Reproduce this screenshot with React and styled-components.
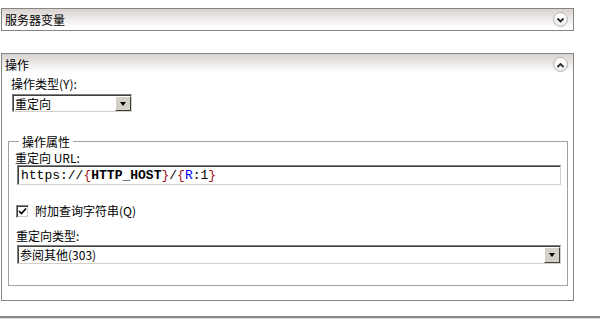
import styled, { createGlobalStyle } from "styled-components";

const Global = createGlobalStyle`
  body {
    margin: 0;
    background: #fff;
    font-family: "Noto Sans CJK SC", "Liberation Sans", sans-serif;
    font-size: 12px;
    color: #000;
  }
`;

const Page = styled.div`
  width: 600px;
  height: 319px;
  overflow: hidden;
  display: flex;
  flex-direction: column;
  padding-top: 8px;
  box-sizing: border-box;
`;

const Panel = styled.section`
  margin-left: 1px;
  width: 573px;
  flex-shrink: 0;
  box-sizing: border-box;
  border: 1px solid #858585;
  margin-bottom: ${(p) => p.$gap || 0}px;
  background: linear-gradient(#d9d2cf 0px, #fff 18px, #fff);
`;

const Header = styled.div`
  height: 21px;
  display: flex;
  align-items: center;
  justify-content: space-between;
  padding: 0 5px 0 3px;
  line-height: 14px;
  font-size: 12px;
`;

const Toggle = styled.span`
  width: 15px;
  height: 15px;
  border-radius: 50%;
  box-sizing: border-box;
  border: 1px solid #b9b6b4;
  background: radial-gradient(circle at 50% 30%, #fff 30%, #e2dedc 100%);
  display: flex;
  align-items: center;
  justify-content: center;
`;

const Body = styled.div`
  padding: 1px 6px 14px 6px;
  display: flex;
  flex-direction: column;
`;

const Label = styled.div`
  line-height: 14px;
  margin: ${(p) => p.$m || "0"};
`;

const Sunken = styled.div`
  box-sizing: border-box;
  height: ${(p) => p.$h || 18}px;
  width: ${(p) => (p.$w ? `${p.$w}px` : "auto")};
  border-top: 1px solid #808080;
  border-left: 1px solid #808080;
  border-right: 1px solid #d4d0c8;
  border-bottom: 1px solid #d4d0c8;
  background: #fff;
  display: flex;
  margin: ${(p) => p.$m || "0"};
`;

const SunkenInner = styled.div`
  flex: 1;
  display: flex;
  align-items: center;
  border-top: 1px solid #404040;
  border-left: 1px solid #404040;
  padding-left: 1px;
  min-width: 0;
`;

const Value = styled.span`
  flex: 1;
  line-height: 14px;
`;

const DropBtn = styled.span`
  width: 16px;
  align-self: stretch;
  box-sizing: border-box;
  background: #d4d0c8;
  border-top: 1px solid #fff;
  border-left: 1px solid #fff;
  border-right: 1px solid #404040;
  border-bottom: 1px solid #404040;
  display: flex;
  align-items: center;
  justify-content: center;
  &::after {
    content: "";
    border-left: 3.5px solid transparent;
    border-right: 3.5px solid transparent;
    border-top: 4px solid #000;
  }
`;

const Group = styled.fieldset`
  margin: 23px 0 0 0;
  padding: 0 6px 21px 6px;
  border: 1px solid #a0a0a0;
  display: flex;
  flex-direction: column;
  min-width: 0;
  width: 560px;
  box-sizing: border-box;
  legend {
    padding: 0 3px;
    margin-left: 4px;
    line-height: 13px;
    font-size: 12px;
  }
`;

const Url = styled.span`
  font-family: "Liberation Mono", "DejaVu Sans Mono", monospace;
  font-size: 13px;
  line-height: 15px;
  padding-left: 1px;
  .b { color: #a31515; }
  .k { font-weight: bold; }
  .r { color: #0000ff; }
`;

const CheckRow = styled.label`
  display: flex;
  align-items: center;
  gap: 6px;
  margin: 19px 0 0 1px;
  line-height: 14px;
`;

const Box = styled.span`
  width: 13px;
  height: 13px;
  box-sizing: border-box;
  border-top: 1px solid #808080;
  border-left: 1px solid #808080;
  border-right: 1px solid #fff;
  border-bottom: 1px solid #fff;
  box-shadow: inset 1px 1px 0 #404040, inset -1px -1px 0 #d4d0c8;
  background: #fff;
  display: flex;
  align-items: center;
  justify-content: center;
`;

const BottomBar = styled.div`
  margin-top: 15px;
  height: 10px;
  flex-shrink: 0;
  border-top: 2px solid #8a8a8a;
  background: #dcd8d5;
`;

function Chevron({ up }) {
  return (
    <svg width="9" height="6" viewBox="0 0 9 6">
      <path
        d={up ? "M1.5 5 L4.5 2 L7.5 5" : "M1.5 1.5 L4.5 4.5 L7.5 1.5"}
        fill="none"
        stroke="#2a2a2a"
        strokeWidth="1.8"
      />
    </svg>
  );
}

export default function App() {
  return (
    <>
      <Global />
      <Page>
        <Panel $gap={22}>
          <Header>
            <span>服务器变量</span>
            <Toggle>
              <Chevron />
            </Toggle>
          </Header>
        </Panel>

        <Panel>
          <Header>
            <span>操作</span>
            <Toggle>
              <Chevron up />
            </Toggle>
          </Header>
          <Body>
            <Label $m="1px 0 0 3px">操作类型(Y):</Label>
            <Sunken $w={120} $m="3px 0 0 4px">
              <SunkenInner>
                <Value>重定向</Value>
                <DropBtn />
              </SunkenInner>
            </Sunken>

            <Group>
              <legend>操作属性</legend>
              <Label $m="3px 0 0 0">重定向 URL:</Label>
              <Sunken $h={20} $m="0 0 0 2px">
                <SunkenInner>
                  <Url>
                    https://<span className="b">{"{"}</span>
                    <span className="k">HTTP_HOST</span>
                    <span className="b">{"}"}</span>/
                    <span className="b">{"{"}</span>
                    <span className="r">R</span>:1
                    <span className="b">{"}"}</span>
                  </Url>
                </SunkenInner>
              </Sunken>

              <CheckRow>
                <Box>
                  <svg width="9" height="9" viewBox="0 0 9 9">
                    <path d="M1 4 L3.5 6.5 L8 1.5" fill="none" stroke="#000" strokeWidth="1.7" />
                  </svg>
                </Box>
                附加查询字符串(Q)
              </CheckRow>

              <Label $m="11px 0 0 1px">重定向类型:</Label>
              <Sunken $h={19} $m="2px 0 0 2px">
                <SunkenInner>
                  <Value>参阅其他(303)</Value>
                  <DropBtn />
                </SunkenInner>
              </Sunken>
            </Group>
          </Body>
        </Panel>

        <BottomBar />
      </Page>
    </>
  );
}
